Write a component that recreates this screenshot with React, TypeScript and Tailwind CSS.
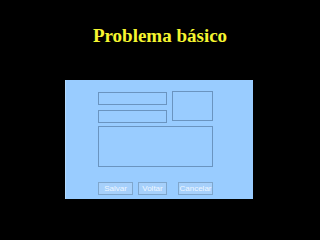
import React from "react";

export default function App() {
  const box = "border border-[#6a94c0]";
  const btn =
    "h-[13px] border border-[#7fa6cc] bg-[#a6d0fb] text-[#eef6ff] text-[8px] leading-none flex items-center justify-center";
  return (
    <div className="w-[320px] h-[240px] bg-black overflow-hidden flex flex-col">
      <div
        className="h-[80px] flex justify-center pt-[26px] text-[#f5f530] text-[19px] font-bold leading-none"
        style={{ fontFamily: '"Liberation Serif", "Times New Roman", serif' }}
      >
        Problema básico
      </div>
      <div className="ml-[65px] w-[188px] h-[119px] bg-[#99ccff] border-l border-[#b3dbff] pl-[32px] pt-[11px] flex flex-col">
        <div className="flex">
          <div className="flex flex-col pt-[1px] gap-[5px]">
            <div className={`${box} w-[69px] h-[13px]`} />
            <div className={`${box} w-[69px] h-[13px]`} />
          </div>
          <div className={`${box} ml-[5px] w-[41px] h-[30px]`} />
        </div>
        <div className={`${box} mt-[3px] w-[115px] h-[41px]`} />
        <div
          className="mt-[15px] flex"
          style={{ fontFamily: '"Liberation Sans", Arial, sans-serif' }}
        >
          <div className={`${btn} w-[35px]`}>Salvar</div>
          <div className={`${btn} ml-[5px] w-[29px]`}>Voltar</div>
          <div className={`${btn} ml-[11px] w-[35px]`}>Cancelar</div>
        </div>
      </div>
    </div>
  );
}
